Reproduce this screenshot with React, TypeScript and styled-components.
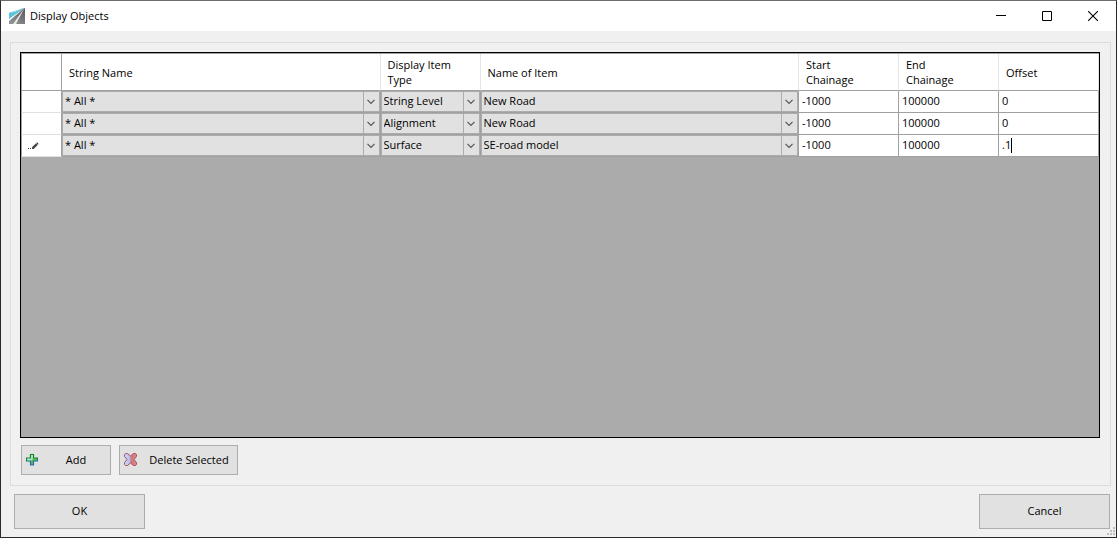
import React from "react";
import styled, { createGlobalStyle } from "styled-components";

const GlobalStyle = createGlobalStyle`
  *, *::before, *::after { box-sizing: border-box; }
  body { margin: 0; background: #f0f0f0; }
  body, button, input, select {
    font-family: "Open Sans", "Noto Sans", sans-serif;
    font-size: 11px;
    line-height: 15px;
    color: #000;
  }
`;

const Window = styled.main`
  display: flex;
  flex-direction: column;
  min-height: 100vh;
  background: #f0f0f0;
  border: 1px solid #2a2a2e;
  border-top-color: #6d6b6d;
`;

const TitleBar = styled.header`
  display: flex;
  align-items: center;
  height: 30px;
  padding-left: 8px;
  background: #fff;
`;

const Title = styled.h1`
  flex: 1;
  margin: 0 0 0 5px;
  padding-bottom: 2px;
  font-size: 11px;
  font-weight: 400;
`;

const CaptionButton = styled.button`
  display: flex;
  align-items: center;
  justify-content: center;
  width: 46px;
  height: 30px;
  padding: 0;
  border: 0;
  background: transparent;
`;

const Group = styled.section`
  display: flex;
  flex: 1;
  flex-direction: column;
  margin: 11px 5px 0 9px;
  padding: 9px 10px 10px 9px;
  border: 1px solid #dcdcdc;
`;

const GridFrame = styled.div`
  flex: 1;
  border: 1px solid #000;
  background: #ababab;
`;

const Table = styled.table`
  width: 100%;
  table-layout: fixed;
  border-collapse: separate;
  border-spacing: 0;
  border-top: 1px solid #a0a0a0;
`;

const Col = styled.col<{ $width?: number }>`
  width: ${(p) => (p.$width ? `${p.$width}px` : "auto")};
`;

const HeadCell = styled.th<{ $corner?: boolean }>`
  height: 37px;
  padding: 0 7px;
  background: #fff;
  border-left: ${(p) => (p.$corner ? "1px solid #a0a0a0" : "0")};
  border-right: 1px solid ${(p) => (p.$corner ? "#a0a0a0" : "#e5e5e5")};
  border-bottom: 1px solid #a0a0a0;
  font-weight: 400;
  text-align: left;
  vertical-align: middle;
`;

const HeadText = styled.span`
  display: block;
  max-width: 66px;
`;

const RowHeader = styled.th`
  height: 22px;
  padding: 0 0 0 6px;
  background: #fff;
  border-left: 1px solid #a0a0a0;
  border-right: 1px solid #a0a0a0;
  border-bottom: 1px solid #e0e0e0;
  text-align: left;
  vertical-align: middle;
  line-height: 0;
`;

const Cell = styled.td`
  height: 22px;
  padding: 0;
  background: #fff;
  border-right: 1px solid #a0a0a0;
  border-bottom: 1px solid #a0a0a0;
`;

const Combo = styled.div`
  display: grid;
  grid-template-columns: 1fr 16px;
  height: 21px;
  border: 1px solid #acacac;
  background: #e1e1e1;
`;

const ComboSelect = styled.select`
  grid-row: 1;
  grid-column: 1 / 3;
  width: 100%;
  height: 19px;
  padding: 0 18px 2px 2px;
  border: 0;
  border-radius: 0;
  background: transparent;
  appearance: none;
  outline: none;
`;

const ComboArrow = styled.span`
  display: flex;
  grid-row: 1;
  grid-column: 2;
  align-items: center;
  padding-left: 3px;
  border-left: 1px solid #acacac;
  pointer-events: none;
`;

const Editor = styled.div`
  display: flex;
  align-items: center;
  height: 21px;
  padding-left: 3px;
`;

const CellInput = styled.input<{ $editing?: boolean }>`
  width: ${(p) => (p.$editing ? "auto" : "100%")};
  field-sizing: ${(p) => (p.$editing ? "content" : "fixed")};
  height: 19px;
  padding: 0 0 2px;
  border: 0;
  background: transparent;
  outline: none;
`;

const Caret = styled.span`
  width: 1px;
  height: 15px;
  background: #000;
`;

const Actions = styled.div`
  display: flex;
  gap: 8px;
  margin: 7px 0 0 1px;
`;

const Button = styled.button<{ $width: number; $height: number }>`
  display: flex;
  align-items: center;
  justify-content: center;
  width: ${(p) => p.$width}px;
  height: ${(p) => p.$height}px;
  padding: 0 4px 2px;
  border: 1px solid #adadad;
  background: #e1e1e1;
`;

const ButtonText = styled.span`
  flex: 1;
  padding-left: 8px;
  text-align: center;
`;

const Footer = styled.footer`
  display: flex;
  justify-content: space-between;
  padding: 8px 6px 0 13px;
`;

const GripRow = styled.div`
  display: flex;
  justify-content: flex-end;
  height: 8px;
  padding-right: 1px;
`;

const Grip = styled.svg`
  margin-top: -2px;
`;

const Logo = () => (
  <svg width="16" height="16" viewBox="0 0 16 16" aria-hidden="true">
    <defs>
      <linearGradient id="road" x1="1" y1="0" x2="0.3" y2="1">
        <stop offset="0" stopColor="#54575a" />
        <stop offset="0.6" stopColor="#77797b" />
        <stop offset="1" stopColor="#8f9294" />
      </linearGradient>
    </defs>
    <path d="M0 5 16 0v16H0z" fill="url(#road)" />
    <path d="M0 5 15 0 0 12z" fill="#5cc3dc" />
    <path d="M0 5 15 0 6 4z" fill="#a5dfec" />
    <path d="M15.500 0 0 11v2z" fill="#fff" />
    <path d="M15.500 0 4 16h3z" fill="#e8e8e8" />
  </svg>
);

const Chevron = () => (
  <svg width="9" height="6" viewBox="0 0 9 6" aria-hidden="true">
    <path d="M0.500 0.800 4 4.500 7.500 0.800" fill="none" stroke="#555" strokeWidth="1.200" />
  </svg>
);

const EditMark = () => (
  <svg width="11" height="8" viewBox="0 0 11 8" aria-hidden="true">
    <path d="M0 6h1v1H0zM2 6h1v1H2z" fill="#333" />
    <path d="M4 7V5.300L8 1.300 9.700 3 5.700 7z" fill="#444" />
    <path d="M8.300 1 9 .3 10.700 2 10 2.700z" fill="#333" />
  </svg>
);

const PlusIcon = () => (
  <svg width="12" height="13" viewBox="0 0 12 13" aria-hidden="true">
    <defs>
      <linearGradient id="plusFill" x1="0" y1="0" x2="1" y2="1">
        <stop offset="0.200" stopColor="#d4ecfa" />
        <stop offset="0.480" stopColor="#a5dcd8" />
        <stop offset="0.550" stopColor="#4fc43a" />
        <stop offset="1" stopColor="#6fd04a" />
      </linearGradient>
      <linearGradient id="plusEdge" x1="0" y1="0" x2="0.300" y2="1">
        <stop offset="0.500" stopColor="#12861a" />
        <stop offset="0.800" stopColor="#2b63c4" />
      </linearGradient>
    </defs>
    <path
      d="M4.500 1.500h3v3.500h4v3h-4v4h-3V8h-4V5h4z"
      fill="url(#plusFill)"
      stroke="url(#plusEdge)"
      strokeWidth="1.200"
    />
  </svg>
);

const CrossIcon = () => (
  <svg width="13" height="13" viewBox="0 0 13 13" aria-hidden="true">
    <defs>
      <linearGradient id="crossFill">
        <stop offset="0.200" stopColor="#c3cdf5" />
        <stop offset="0.450" stopColor="#b4b8ea" />
        <stop offset="0.550" stopColor="#cf7478" />
        <stop offset="1" stopColor="#d98a8a" />
      </linearGradient>
    </defs>
    <path
      d="M1.500 .5h2l3 2.500 3-2.500h2l1 1v2l-2.500 3 2.500 3v2l-1 1h-2l-3-2.500-3 2.500h-2l-1-1v-2l2.500-3-2.500-3v-2z"
      fill="url(#crossFill)"
      stroke="#a5525a"
    />
  </svg>
);

const ComboBox = ({ label, value }: { label: string; value: string }) => (
  <Combo>
    <ComboSelect aria-label={label} defaultValue={value}>
      <option>{value}</option>
    </ComboSelect>
    <ComboArrow>
      <Chevron />
    </ComboArrow>
  </Combo>
);

const TextCell = ({ label, value, editing }: { label: string; value: string; editing?: boolean }) => (
  <Editor>
    <CellInput aria-label={label} defaultValue={value} $editing={editing} />
    {editing && <Caret />}
  </Editor>
);

const rows = [
  { name: "* All *", type: "String Level", item: "New Road", start: "-1000", end: "100000", offset: "0" },
  { name: "* All *", type: "Alignment", item: "New Road", start: "-1000", end: "100000", offset: "0" },
  { name: "* All *", type: "Surface", item: "SE-road model", start: "-1000", end: "100000", offset: ".1", editing: true },
];

export default function App() {
  return (
    <>
      <GlobalStyle />
      <Window>
        <TitleBar>
          <Logo />
          <Title>Display Objects</Title>
          <CaptionButton aria-label="Minimize">
            <svg width="10" height="10" viewBox="0 0 10 10">
              <path d="M0 4h10v1H0z" />
            </svg>
          </CaptionButton>
          <CaptionButton aria-label="Maximize">
            <svg width="10" height="10" viewBox="0 0 10 10">
              <path d="M.5 .5h9v9h-9z" fill="none" stroke="#000" />
            </svg>
          </CaptionButton>
          <CaptionButton aria-label="Close">
            <svg width="10" height="10" viewBox="0 0 10 10">
              <path d="M0 0 10 10M10 0 0 10" fill="none" stroke="#000" strokeWidth="1.100" />
            </svg>
          </CaptionButton>
        </TitleBar>

        <Group>
          <GridFrame>
            <Table>
              <colgroup>
                <Col $width={41} />
                <Col />
                <Col $width={100} />
                <Col />
                <Col $width={100} />
                <Col $width={100} />
                <Col $width={100} />
              </colgroup>
              <thead>
                <tr>
                  <HeadCell $corner />
                  <HeadCell>String Name</HeadCell>
                  <HeadCell><HeadText>Display Item Type</HeadText></HeadCell>
                  <HeadCell>Name of Item</HeadCell>
                  <HeadCell><HeadText>Start Chainage</HeadText></HeadCell>
                  <HeadCell><HeadText>End Chainage</HeadText></HeadCell>
                  <HeadCell>Offset</HeadCell>
                </tr>
              </thead>
              <tbody>
                {rows.map((row, i) => (
                  <tr key={i}>
                    <RowHeader>{row.editing && <EditMark />}</RowHeader>
                    <Cell><ComboBox label="String Name" value={row.name} /></Cell>
                    <Cell><ComboBox label="Display Item Type" value={row.type} /></Cell>
                    <Cell><ComboBox label="Name of Item" value={row.item} /></Cell>
                    <Cell><TextCell label="Start Chainage" value={row.start} /></Cell>
                    <Cell><TextCell label="End Chainage" value={row.end} /></Cell>
                    <Cell><TextCell label="Offset" value={row.offset} editing={row.editing} /></Cell>
                  </tr>
                ))}
              </tbody>
            </Table>
          </GridFrame>
          <Actions>
            <Button $width={90} $height={30}>
              <PlusIcon />
              <ButtonText>Add</ButtonText>
            </Button>
            <Button $width={119} $height={30}>
              <CrossIcon />
              <ButtonText>Delete Selected</ButtonText>
            </Button>
          </Actions>
        </Group>

        <Footer>
          <Button $width={131} $height={35}>OK</Button>
          <Button $width={131} $height={35}>Cancel</Button>
        </Footer>
        <GripRow>
          <Grip width="8" height="8" viewBox="0 0 8 8" aria-hidden="true">
            <path
              d="M6 0h2v2H6zM3 3h2v2H3zM6 3h2v2H6zM0 6h2v2H0zM3 6h2v2H3zM6 6h2v2H6z"
              fill="#bfbfbf"
            />
          </Grip>
        </GripRow>
      </Window>
    </>
  );
}
